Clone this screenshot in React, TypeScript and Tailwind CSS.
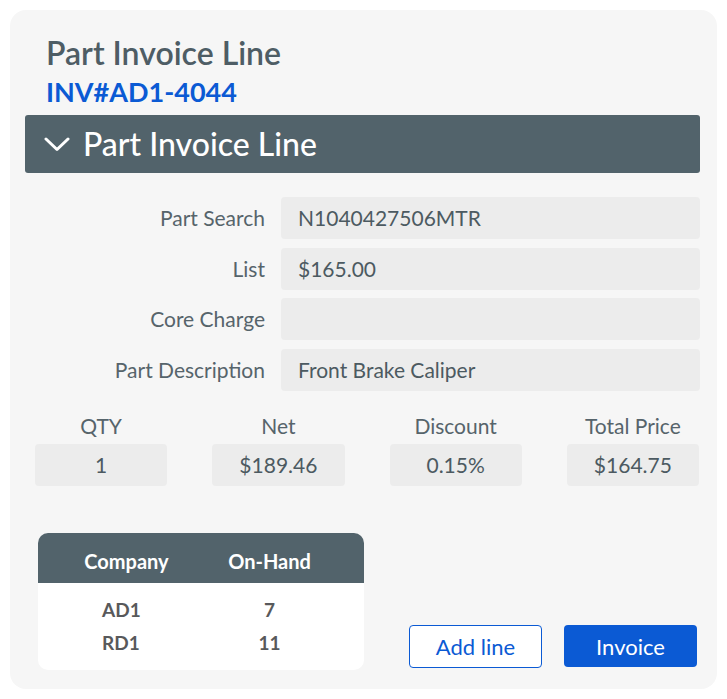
import React from 'react';

const fields = [
  { label: 'Part Search', value: 'N1040427506MTR' },
  { label: 'List', value: '$165.00' },
  { label: 'Core Charge', value: '' },
  { label: 'Part Description', value: 'Front Brake Caliper' },
];

const totals = [
  { label: 'QTY', value: '1' },
  { label: 'Net', value: '$189.46' },
  { label: 'Discount', value: '0.15%' },
  { label: 'Total Price', value: '$164.75' },
];

const stock = [
  { company: 'AD1', onHand: '7' },
  { company: 'RD1', onHand: '11' },
];

export default function App() {
  return (
    <div
      className="min-h-screen bg-white p-[10px]"
      style={{ fontFamily: 'Lato, "Open Sans", sans-serif' }}
    >
      <div className="w-[707px] h-[679px] bg-[#f6f6f6] rounded-[16px] pl-[15px] pr-[17px] pt-[24px] pb-[19px] flex flex-col">
        {/* Title */}
        <div className="pl-[21px]">
          <h1 className="text-[32px] leading-[38px] font-semibold text-[#4e5d65]">Part Invoice Line</h1>
          <div className="text-[27px] leading-[32px] font-bold text-[#0b5ad4] mt-[4px]">INV#AD1-4044</div>
        </div>

        {/* Section header */}
        <div className="mt-[7px] h-[58px] bg-[#52636b] rounded-[3px] flex items-center pl-[19px]">
          <svg width="26" height="15" viewBox="0 0 26 15" fill="none" className="shrink-0">
            <path d="M2 2 L13 12.5 L24 2" stroke="white" strokeWidth="3" strokeLinecap="round" strokeLinejoin="round" />
          </svg>
          <span className="ml-[13px] text-[32px] leading-[38px] font-medium text-white">Part Invoice Line</span>
        </div>

        {/* Form */}
        <div className="mt-[24px] grid grid-cols-[240px_1fr] gap-x-4 gap-y-[8.5px]">
          {fields.map((f) => (
            <React.Fragment key={f.label}>
              <div className="h-[42px] flex items-center justify-end text-[21px] text-[#56646b]">{f.label}</div>
              <div className="h-[42px] flex items-center bg-[#ececec] rounded-[4px] pl-[17px] text-[21px] text-[#4c5a61]">
                {f.value}
              </div>
            </React.Fragment>
          ))}
        </div>

        {/* Totals */}
        <div className="mt-[22px] pl-[10px] pr-[1px] grid grid-cols-4 gap-x-[45px]">
          {totals.map((t) => (
            <div key={t.label} className="flex flex-col items-center">
              <div className="text-[21px] leading-[26px] text-[#56646b]">{t.label}</div>
              <div className="mt-[5px] w-full h-[42px] bg-[#ececec] rounded-[4px] flex items-center justify-center text-[21px] text-[#4c5a61]">
                {t.value}
              </div>
            </div>
          ))}
        </div>

        {/* Stock table + actions */}
        <div className="mt-auto flex items-end pl-[13px] pr-[3px]">
          <div className="w-[326px] bg-white rounded-[10px] overflow-hidden">
            <div className="h-[50px] bg-[#52636b] grid grid-cols-[129px_157px] pl-[24px] pt-[16px] text-[20px] leading-[24px] font-bold text-white">
              <div className="text-center">Company</div>
              <div className="text-center">On-Hand</div>
            </div>
            <div className="pt-[10px] pb-[11px] grid grid-cols-[129px_157px] pl-[24px] text-[19px] leading-[33px] font-bold text-[#58595b]">
              {stock.map((s) => (
                <React.Fragment key={s.company}>
                  <div className="pl-[40px]">{s.company}</div>
                  <div className="text-center">{s.onHand}</div>
                </React.Fragment>
              ))}
            </div>
          </div>

          <div className="ml-auto flex gap-[22px] mb-[2px]">
            <button className="w-[133px] h-[43px] bg-white border border-[#0b5ad4] rounded-[4px] text-[22px] text-[#0b5ad4]">
              Add line
            </button>
            <button className="w-[133px] h-[42px] bg-[#0b5ad4] rounded-[4px] text-[22px] text-white">
              Invoice
            </button>
          </div>
        </div>
      </div>
    </div>
  );
}
